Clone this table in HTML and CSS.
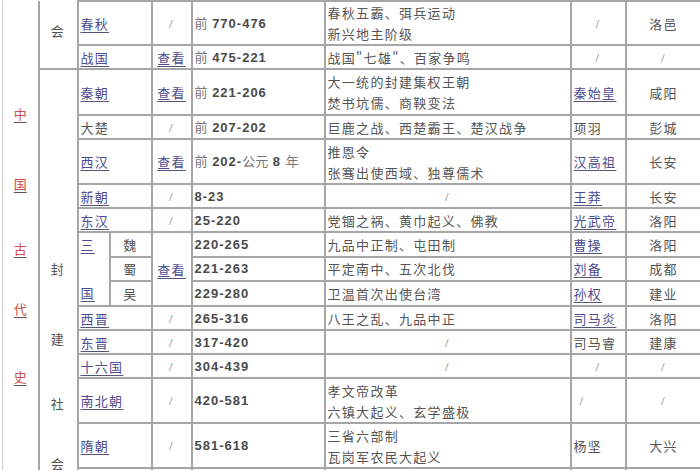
FILE: index.html
```html
<!DOCTYPE html>
<html lang="zh">
<head>
<meta charset="utf-8">
<title>中国古代史</title>
<link rel="stylesheet" href="styles.css">
</head>
<body>
<table class="hist">
<colgroup>
<col class="w-era"><col class="w-soc"><col class="w-dya"><col class="w-sub"><col class="w-view"><col class="w-year"><col class="w-ev"><col class="w-emp"><col class="w-cap">
</colgroup>
<tbody>
<tr class="r2t">
  <td class="era cont" rowspan="16"><div class="era-chars"><a class="red c1">中</a><a class="red c2">国</a><a class="red c3">古</a><a class="red c4">代</a><a class="red c5">史</a></div></td>
  <td class="soc cont" rowspan="2"><div class="soc-top">会</div></td>
  <td class="dya" colspan="2"><a>春秋</a></td>
  <td class="ctr slash">/</td>
  <td class="yr"><span class="cjk">前</span> 770-476</td>
  <td class="ev">春秋五霸、弭兵运动<br>新兴地主阶级</td>
  <td class="ctr slash">/</td>
  <td class="ctr">洛邑</td>
</tr>
<tr class="r1">
  <td class="dya" colspan="2"><a>战国</a></td>
  <td class="ctr"><a>查看</a></td>
  <td class="yr"><span class="cjk">前</span> 475-221</td>
  <td class="ev">战国"七雄"、百家争鸣</td>
  <td class="ctr slash">/</td>
  <td class="ctr slash">/</td>
</tr>
<tr class="r2">
  <td class="soc" rowspan="14"><div class="soc-chars"><span class="s1">封</span><span class="s2">建</span><span class="s3">社</span><span class="s4">会</span></div></td>
  <td class="dya" colspan="2"><a>秦朝</a></td>
  <td class="ctr"><a>查看</a></td>
  <td class="yr"><span class="cjk">前</span> 221-206</td>
  <td class="ev">大一统的封建集权王朝<br>焚书坑儒、商鞅变法</td>
  <td class="emp"><a>秦始皇</a></td>
  <td class="ctr">咸阳</td>
</tr>
<tr class="r1">
  <td class="dya" colspan="2">大楚</td>
  <td class="ctr slash">/</td>
  <td class="yr"><span class="cjk">前</span> 207-202</td>
  <td class="ev">巨鹿之战、西楚霸王、楚汉战争</td>
  <td class="emp">项羽</td>
  <td class="ctr">彭城</td>
</tr>
<tr class="r2s">
  <td class="dya" colspan="2"><a>西汉</a></td>
  <td class="ctr"><a>查看</a></td>
  <td class="yr"><span class="cjk">前</span> 202-<span class="cjk">公元</span> 8 <span class="cjk">年</span></td>
  <td class="ev">推恩令<br>张骞出使西域、独尊儒术</td>
  <td class="emp"><a>汉高祖</a></td>
  <td class="ctr">长安</td>
</tr>
<tr class="r1">
  <td class="dya" colspan="2"><a>新朝</a></td>
  <td class="ctr slash">/</td>
  <td class="yr">8-23</td>
  <td class="ctr slash">/</td>
  <td class="emp"><a>王莽</a></td>
  <td class="ctr">长安</td>
</tr>
<tr class="r1">
  <td class="dya" colspan="2"><a>东汉</a></td>
  <td class="ctr slash">/</td>
  <td class="yr">25-220</td>
  <td class="ev">党锢之祸、黄巾起义、佛教</td>
  <td class="emp"><a>光武帝</a></td>
  <td class="ctr">洛阳</td>
</tr>
<tr class="r1">
  <td class="dya sanguo" rowspan="3"><a>三</a><br><br><a>国</a></td>
  <td class="ctr">魏</td>
  <td class="ctr" rowspan="3"><a>查看</a></td>
  <td class="yr">220-265</td>
  <td class="ev">九品中正制、屯田制</td>
  <td class="emp"><a>曹操</a></td>
  <td class="ctr">洛阳</td>
</tr>
<tr class="r1">
  <td class="ctr">蜀</td>
  <td class="yr">221-263</td>
  <td class="ev">平定南中、五次北伐</td>
  <td class="emp"><a>刘备</a></td>
  <td class="ctr">成都</td>
</tr>
<tr class="r1">
  <td class="ctr">吴</td>
  <td class="yr">229-280</td>
  <td class="ev">卫温首次出使台湾</td>
  <td class="emp"><a>孙权</a></td>
  <td class="ctr">建业</td>
</tr>
<tr class="r1">
  <td class="dya" colspan="2"><a>西晋</a></td>
  <td class="ctr slash">/</td>
  <td class="yr">265-316</td>
  <td class="ev">八王之乱、九品中正</td>
  <td class="emp"><a>司马炎</a></td>
  <td class="ctr">洛阳</td>
</tr>
<tr class="r1">
  <td class="dya" colspan="2"><a>东晋</a></td>
  <td class="ctr slash">/</td>
  <td class="yr">317-420</td>
  <td class="ctr slash">/</td>
  <td class="emp">司马睿</td>
  <td class="ctr">建康</td>
</tr>
<tr class="r1">
  <td class="dya" colspan="2"><a>十六国</a></td>
  <td class="ctr slash">/</td>
  <td class="yr">304-439</td>
  <td class="ctr slash">/</td>
  <td class="ctr slash">/</td>
  <td class="ctr slash">/</td>
</tr>
<tr class="r2s">
  <td class="dya" colspan="2"><a>南北朝</a></td>
  <td class="ctr slash">/</td>
  <td class="yr">420-581</td>
  <td class="ev">孝文帝改革<br>六镇大起义、玄学盛极</td>
  <td class="emp slash indent">/</td>
  <td class="ctr slash">/</td>
</tr>
<tr class="r2s">
  <td class="dya" colspan="2"><a>隋朝</a></td>
  <td class="ctr slash">/</td>
  <td class="yr">581-618</td>
  <td class="ev">三省六部制<br>瓦岗军农民大起义</td>
  <td class="emp">杨坚</td>
  <td class="ctr">大兴</td>
</tr>
<tr class="r2">
  <td class="dya" colspan="2"><a>唐朝</a></td>
  <td class="ctr"><a>查看</a></td>
  <td class="yr">618-907</td>
  <td class="ev">贞观之治、开元盛世<br>安史之乱</td>
  <td class="emp"><a>李渊</a></td>
  <td class="ctr">长安</td>
</tr>
</tbody>
</table>
</body>
</html>
```

FILE: styles.css
```css
html, body {
  margin: 0;
  padding: 0;
  background: #ffffff;
  width: 700px;
  height: 470px;
  overflow: hidden;
}

.hist {
  border-collapse: collapse;
  table-layout: fixed;
  width: 699px;
  margin-left: 2px;
  font-family: "Noto Sans CJK SC", sans-serif;
  font-size: 13px;
  color: #555555;
  letter-spacing: 1.3px;
}

.w-era { width: 36px; }
.w-soc { width: 39px; }
.w-dya { width: 32px; }
.w-sub { width: 42px; }
.w-view { width: 40px; }
.w-year { width: 133px; }
.w-ev { width: 246px; }
.w-emp { width: 55px; }
.w-cap { width: 76px; }

.hist td {
  border: 2px solid #a6a6a6;
  padding: 0 2px;
  line-height: 21px;
  vertical-align: middle;
  white-space: nowrap;
  overflow: hidden;
}

.r1 { height: 24px; }
.r2 { height: 46px; }
.r2s { height: 45px; }
.r2t { height: 43px; }

.hist td.cont { border-top: none; }
.hist td.era { border-left: 1px solid #cfcfcf; vertical-align: top; padding: 0; }
.hist td.soc { vertical-align: top; padding: 0; }
.hist td.sanguo { line-height: 24px; }

.era-chars {
  display: flex;
  flex-direction: column;
  align-items: center;
}
.era-chars a, .soc-chars span, .soc-top {
  display: block;
  line-height: 18px;
  height: 18px;
}
.c1 { margin-top: 104px; }
.c2 { margin-top: 52px; }
.c3 { margin-top: 47px; }
.c4 { margin-top: 42px; }
.c5 { margin-top: 50px; }

.soc-top {
  text-align: center;
  padding-top: 21px;
}

.soc-chars {
  display: flex;
  flex-direction: column;
  align-items: center;
}
.s1 { margin-top: 190px; }
.s2 { margin-top: 52px; }
.s3 { margin-top: 47px; }
.s4 { margin-top: 42px; }

.hist a {
  color: #4c4c8e;
  text-decoration: underline;
  text-decoration-color: #55557a;
  text-underline-offset: 3px;
}

.hist a.red {
  color: #c8504c;
  text-decoration-color: #6a5050;
  letter-spacing: 0;
}

.ctr { text-align: center; }
.dya { text-align: left; }
.emp { text-align: left; padding-left: 1px; }
.hist td.indent { padding-left: 8px; }

.slash {
  color: #777777;
  font-family: "Liberation Serif", serif;
}

.yr {
  font-family: "Liberation Sans", Arial, sans-serif;
  font-weight: bold;
  color: #4a4a4a;
  letter-spacing: 1px;
}
.yr .cjk {
  font-family: "Noto Sans CJK SC", sans-serif;
  font-weight: normal;
  color: #777777;
  letter-spacing: 0;
  line-height: 12px;
}

.ev { padding-left: 3px; }
```
